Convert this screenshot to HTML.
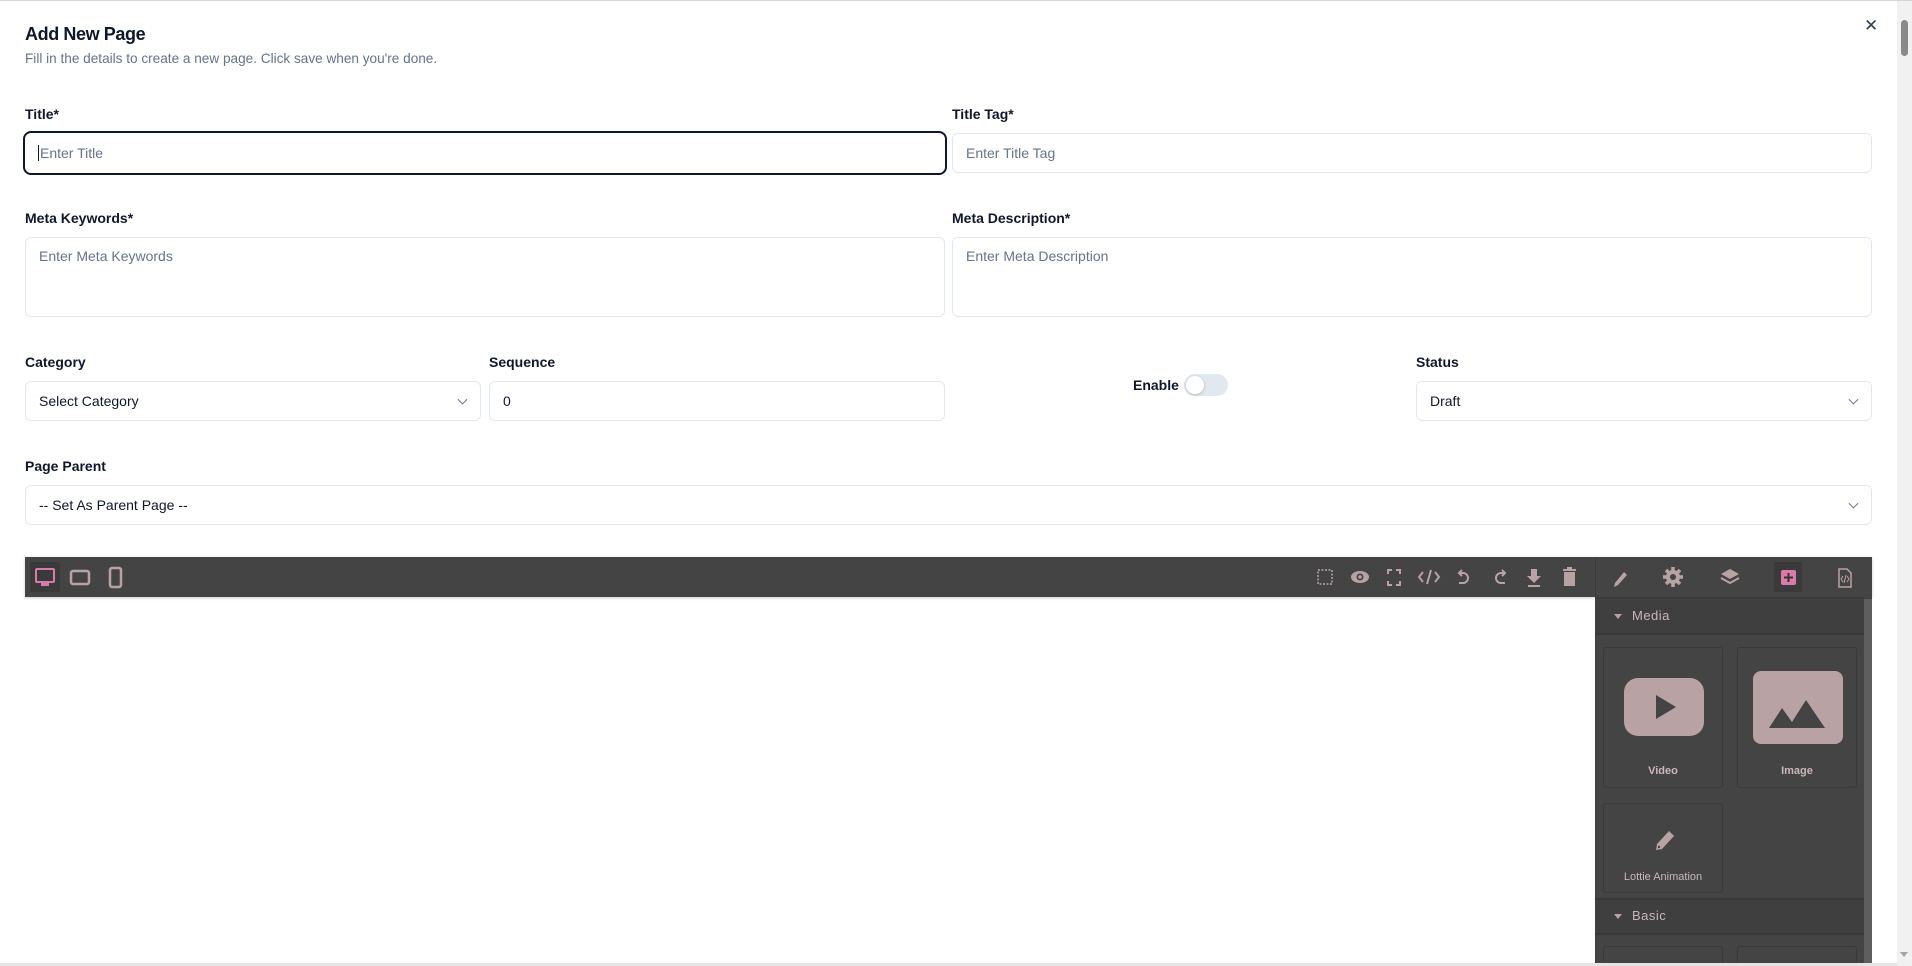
<!DOCTYPE html>
<html><head><meta charset="utf-8"><style>
*{box-sizing:border-box;margin:0;padding:0}
html,body{width:1912px;height:966px;overflow:hidden}
body{background:#fff;font-family:"Liberation Sans",sans-serif;color:#0f172a;position:relative}
.a{position:absolute}
.lbl{position:absolute;font-size:14px;font-weight:bold;color:#0f172a}
.inp{position:absolute;border:1px solid #e2e8f0;border-radius:6px;background:#fff;font-size:14px;color:#64748b;padding-left:13px;display:flex;align-items:center}
.sel{color:#0f172a}
.chev{position:absolute;right:14px;top:50%;width:7px;height:7px;border-right:1.3px solid #64748b;border-bottom:1.3px solid #64748b;transform:translateY(-70%) rotate(45deg)}
.card{position:absolute;background:#444;border:1px solid #393939;border-radius:3px;color:#c9b7b9;font-size:11px;font-weight:bold;text-align:center}
</style></head><body>
<div class="a" style="left:25px;top:24px;font-size:18px;font-weight:bold;letter-spacing:-0.4px">Add New Page</div>
<div class="a" style="left:25px;top:51px;font-size:13.6px;color:#64748b">Fill in the details to create a new page. Click save when you're done.</div>
<div class="a" style="left:1864px;top:16px;font-size:17px;color:#334155">✕</div>

<div class="lbl" style="left:25px;top:106px">Title*</div>
<div class="inp" style="left:23px;top:131px;width:924px;height:44px;border:2px solid #0f172a;border-radius:8px;padding-left:13px"><span style="border-left:1px solid #0f172a;padding-left:1px">Enter Title</span></div>
<div class="lbl" style="left:952px;top:106px">Title Tag*</div>
<div class="inp" style="left:952px;top:133px;width:920px;height:40px">Enter Title Tag</div>

<div class="lbl" style="left:25px;top:210px">Meta Keywords*</div>
<div class="inp" style="left:25px;top:237px;width:920px;height:80px;align-items:flex-start;padding-top:10px">Enter Meta Keywords</div>
<div class="lbl" style="left:952px;top:210px">Meta Description*</div>
<div class="inp" style="left:952px;top:237px;width:920px;height:80px;align-items:flex-start;padding-top:10px">Enter Meta Description</div>

<div class="lbl" style="left:25px;top:354px">Category</div>
<div class="inp sel" style="left:25px;top:381px;width:456px;height:40px">Select Category<span class="chev"></span></div>
<div class="lbl" style="left:489px;top:354px">Sequence</div>
<div class="inp sel" style="left:489px;top:381px;width:456px;height:40px">0</div>
<div class="lbl" style="left:1133px;top:377px">Enable</div>
<div class="a" style="left:1184px;top:374px;width:44px;height:22px;border-radius:11px;background:#e2e8f0"><div class="a" style="left:2px;top:2px;width:18px;height:18px;border-radius:9px;background:#fff;box-shadow:0 1px 3px rgba(0,0,0,.2)"></div></div>
<div class="lbl" style="left:1416px;top:354px">Status</div>
<div class="inp sel" style="left:1416px;top:381px;width:456px;height:40px">Draft<span class="chev"></span></div>

<div class="lbl" style="left:25px;top:458px">Page Parent</div>
<div class="inp sel" style="left:25px;top:485px;width:1847px;height:40px">-- Set As Parent Page --<span class="chev"></span></div>

<div class="a" style="left:25px;top:557px;width:1847px;height:40px;background:#444;box-shadow:0 1px 3px rgba(0,0,0,.2)"></div>
<div class="a" style="left:30px;top:562px;width:30px;height:30px;background:#3a3a3a;border-radius:2px"></div>
<svg class="a" style="left:0;top:540px" width="1600" height="70" viewBox="0 540 1600 70">
<g fill="none" stroke="#d97aa8" stroke-width="2"><rect x="36" y="569" width="18" height="13" rx="1"/></g><rect x="41" y="583" width="8" height="3" fill="#d97aa8"/>
<g fill="none" stroke="#b9a2a4" stroke-width="2.5"><rect x="71" y="571" width="18" height="13" rx="2"/><rect x="110" y="568" width="11" height="19" rx="2"/></g>
<g fill="none" stroke="#b9a2a4" stroke-width="2">
<rect x="1318" y="570" width="14" height="14" stroke-dasharray="2 1.5" stroke-width="1.5"/>
<path d="M1388 574v-4h4M1396 570h4v4M1400 581v4h-4M1392 585h-4v-4"/>
<path d="M1423 572l-4 5 4 5M1435 572l4 5-4 5M1431 570l-4 14"/>
<path d="M1462 570l-3 3 3 3M1459 573h4a5 5 0 010 10h-4"/>
<path d="M1502 570l3 3-3 3M1505 573h-4a5 5 0 000 10h4"/>
<path d="M1528 586h12"/>
</g>
<ellipse cx="1360" cy="577" rx="9" ry="6" fill="#b9a2a4"/><circle cx="1360" cy="577" r="3.5" fill="#444"/><circle cx="1360" cy="577" r="1.8" fill="#b9a2a4"/>
<path d="M1531 569h6v7h4l-7 7-7-7h4z" fill="#b9a2a4"/>
<path d="M1564 572h11v14h-11zM1563 569h13v2h-13zM1567 567h5v2h-5z" fill="#b9a2a4"/>
</svg>
<div class="a" style="left:1595px;top:557px;width:277px;height:409px;background:#444;border-left:1px solid #3a3a3a"></div>
<div class="a" style="left:1595px;top:597px;width:269px;height:2px;background:#3a3a3a"></div>
<div class="a" style="left:1864px;top:599px;width:8px;height:367px;background:#5e5e5e"></div>
<div class="a" style="left:1774px;top:562px;width:28px;height:30px;background:#3a3a3a;border-radius:2px"></div>
<svg class="a" style="left:1595px;top:561px" width="277" height="36">
<path d="M29 11l3 3-9 10-4 2 1-4z" fill="#b9a2a4"/>
<g stroke="#b9a2a4" stroke-width="3.5"><path d="M78 6v20M68 16h20M71 9l14 14M85 9l-14 14"/></g><circle cx="78" cy="16" r="7" fill="#b9a2a4"/><circle cx="78" cy="16" r="3" fill="#444"/>
<path d="M135 8l9 5-9 5-9-5z" fill="#b9a2a4"/><path d="M126 17l9 5 9-5" fill="none" stroke="#b9a2a4" stroke-width="2"/>
<rect x="186" y="9" width="15" height="15" rx="2" fill="#d97aa8"/><path d="M193.5 12v9M189 16.5h9" stroke="#333" stroke-width="2"/>
<path d="M244 8h8l4 4v14h-12z" fill="none" stroke="#b9a2a4" stroke-width="1.5"/><path d="M248 15l-2 3 2 3M252 15l2 3-2 3M251 14l-2 8" fill="none" stroke="#b9a2a4" stroke-width="1"/>
</svg>
<div class="a" style="left:1595px;top:599px;width:269px;height:36px;background:#3f3f3f;border-bottom:2px solid #393939"></div>
<div class="a" style="left:1614px;top:614px;border:4px solid transparent;border-top:5px solid #b9a2a4"></div>
<div class="a" style="left:1632px;top:608px;font-size:13px;color:#c9b7b9;letter-spacing:.5px">Media</div>
<div class="card" style="left:1603px;top:647px;width:120px;height:141px"><svg class="a" style="left:20px;top:30px" width="80" height="58"><rect x="0" y="0" width="80" height="58" rx="14" fill="#b9a2a4"/><path d="M32 17l20 12-20 12z" fill="#444"/></svg><div class="a" style="left:0;width:100%;top:117px">Video</div></div>
<div class="card" style="left:1737px;top:647px;width:120px;height:141px"><svg class="a" style="left:15px;top:23px" width="90" height="73"><rect x="0" y="0" width="90" height="73" rx="8" fill="#b9a2a4"/><path d="M16 57l13-20 10 14 14-22 19 28z" fill="#444"/></svg><div class="a" style="left:0;width:100%;top:117px">Image</div></div>
<div class="card" style="left:1603px;top:803px;width:120px;height:90px"><svg class="a" style="left:50px;top:25px" width="22" height="24"><path d="M15 2l5 5-12 13-6 1 1-6z" fill="#b9a2a4"/><circle cx="5" cy="18" r="1.2" fill="#444"/></svg><div class="a" style="left:0;width:100%;top:67px;font-weight:normal">Lottie Animation</div></div>
<div class="a" style="left:1595px;top:898px;width:269px;height:37px;background:#3f3f3f;border-top:2px solid #393939;border-bottom:2px solid #393939"></div>
<div class="a" style="left:1614px;top:914px;border:4px solid transparent;border-top:5px solid #b9a2a4"></div>
<div class="a" style="left:1632px;top:908px;font-size:13px;color:#c9b7b9;letter-spacing:.5px">Basic</div>
<div class="card" style="left:1603px;top:946px;width:120px;height:40px"></div>
<div class="card" style="left:1737px;top:946px;width:120px;height:40px"></div>
<div class="a" style="left:0;top:963px;width:1897px;height:3px;background:#e5e5e5"></div>
<div class="a" style="left:1897px;top:0;width:15px;height:966px;background:#f1f1f1"></div>
<div class="a" style="left:1901px;top:20px;width:7px;height:36px;background:#8a8a8a;border-radius:4px"></div>
<div class="a" style="left:1900px;top:952px;width:0;height:0;border-left:4px solid transparent;border-right:4px solid transparent;border-top:5px solid #a3a3a3"></div>
<div class="a" style="left:0;top:0;width:1912px;height:1px;background:#d4d4d4"></div>
</body></html>
